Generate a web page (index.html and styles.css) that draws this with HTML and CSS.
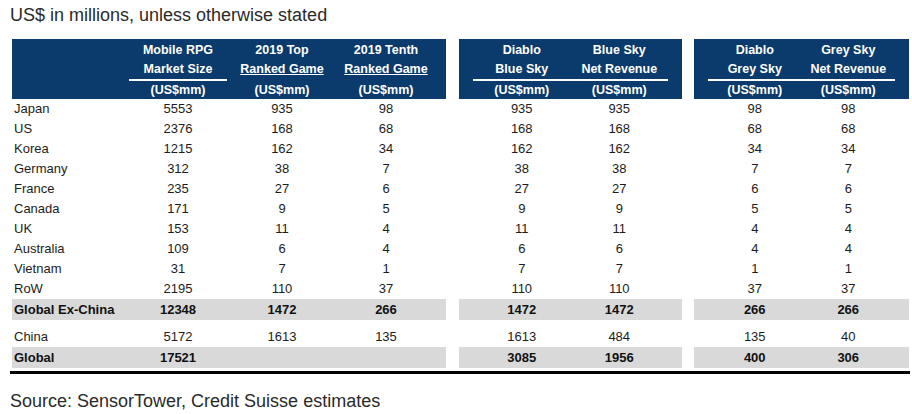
FILE: index.html
```html
<!DOCTYPE html>
<html>
<head>
<meta charset="utf-8">
<link rel="stylesheet" href="styles.css">
</head>
<body>
<div class="page">
  <div class="title">US$ in millions, unless otherwise stated</div>
  <table class="data">
    <colgroup>
      <col class="w-label"><col class="w-a"><col class="w-a"><col class="w-a"><col class="w-pr1">
      <col class="w-gap1">
      <col class="w-p"><col class="w-b"><col class="w-b"><col class="w-p">
      <col class="w-gap2">
      <col class="w-p"><col class="w-c"><col class="w-c"><col class="w-p">
    </colgroup>
    <thead>
      <tr class="h1">
        <td class="hd"></td><td class="hd">Mobile RPG</td><td class="hd">2019 Top</td><td class="hd">2019 Tenth</td><td class="hd"></td>
        <td class="gap"></td>
        <td class="hd"></td><td class="hd">Diablo</td><td class="hd">Blue Sky</td><td class="hd"></td>
        <td class="gap"></td>
        <td class="hd"></td><td class="hd">Diablo</td><td class="hd">Grey Sky</td><td class="hd"></td>
      </tr>
      <tr class="h2">
        <td class="hd"></td><td class="hd"><div class="ul inset">Market Size</div></td><td class="hd"><div class="nl"><u>Ranked Game</u></div></td><td class="hd"><div class="nl"><u>Ranked Game</u></div></td><td class="hd"></td>
        <td class="gap"></td>
        <td class="hd"></td><td class="hd"><div class="ul">Blue Sky</div></td><td class="hd"><div class="ul">Net Revenue</div></td><td class="hd"></td>
        <td class="gap"></td>
        <td class="hd"></td><td class="hd"><div class="ul">Grey Sky</div></td><td class="hd"><div class="ul">Net Revenue</div></td><td class="hd"></td>
      </tr>
      <tr class="h3">
        <td class="hd"></td><td class="hd">(US$mm)</td><td class="hd">(US$mm)</td><td class="hd">(US$mm)</td><td class="hd"></td>
        <td class="gap"></td>
        <td class="hd"></td><td class="hd">(US$mm)</td><td class="hd">(US$mm)</td><td class="hd"></td>
        <td class="gap"></td>
        <td class="hd"></td><td class="hd">(US$mm)</td><td class="hd">(US$mm)</td><td class="hd"></td>
      </tr>
    </thead>
    <tbody>
      <tr><td class="lbl">Japan</td><td>5553</td><td>935</td><td>98</td><td></td><td></td><td></td><td>935</td><td>935</td><td></td><td></td><td></td><td>98</td><td>98</td><td></td></tr>
      <tr><td class="lbl">US</td><td>2376</td><td>168</td><td>68</td><td></td><td></td><td></td><td>168</td><td>168</td><td></td><td></td><td></td><td>68</td><td>68</td><td></td></tr>
      <tr><td class="lbl">Korea</td><td>1215</td><td>162</td><td>34</td><td></td><td></td><td></td><td>162</td><td>162</td><td></td><td></td><td></td><td>34</td><td>34</td><td></td></tr>
      <tr><td class="lbl">Germany</td><td>312</td><td>38</td><td>7</td><td></td><td></td><td></td><td>38</td><td>38</td><td></td><td></td><td></td><td>7</td><td>7</td><td></td></tr>
      <tr><td class="lbl">France</td><td>235</td><td>27</td><td>6</td><td></td><td></td><td></td><td>27</td><td>27</td><td></td><td></td><td></td><td>6</td><td>6</td><td></td></tr>
      <tr><td class="lbl">Canada</td><td>171</td><td>9</td><td>5</td><td></td><td></td><td></td><td>9</td><td>9</td><td></td><td></td><td></td><td>5</td><td>5</td><td></td></tr>
      <tr><td class="lbl">UK</td><td>153</td><td>11</td><td>4</td><td></td><td></td><td></td><td>11</td><td>11</td><td></td><td></td><td></td><td>4</td><td>4</td><td></td></tr>
      <tr><td class="lbl">Australia</td><td>109</td><td>6</td><td>4</td><td></td><td></td><td></td><td>6</td><td>6</td><td></td><td></td><td></td><td>4</td><td>4</td><td></td></tr>
      <tr><td class="lbl">Vietnam</td><td>31</td><td>7</td><td>1</td><td></td><td></td><td></td><td>7</td><td>7</td><td></td><td></td><td></td><td>1</td><td>1</td><td></td></tr>
      <tr><td class="lbl">RoW</td><td>2195</td><td>110</td><td>37</td><td></td><td></td><td></td><td>110</td><td>110</td><td></td><td></td><td></td><td>37</td><td>37</td><td></td></tr>
      <tr class="total">
        <td class="lbl tb">Global Ex-China</td><td class="tb">12348</td><td class="tb">1472</td><td class="tb">266</td><td class="tb"></td>
        <td class="gap"></td>
        <td class="tb"></td><td class="tb">1472</td><td class="tb">1472</td><td class="tb"></td>
        <td class="gap"></td>
        <td class="tb"></td><td class="tb">266</td><td class="tb">266</td><td class="tb"></td>
      </tr>
      <tr class="spacer"><td colspan="15"></td></tr>
      <tr><td class="lbl">China</td><td>5172</td><td>1613</td><td>135</td><td></td><td></td><td></td><td>1613</td><td>484</td><td></td><td></td><td></td><td>135</td><td>40</td><td></td></tr>
      <tr class="total">
        <td class="lbl tb">Global</td><td class="tb">17521</td><td class="tb"></td><td class="tb"></td><td class="tb"></td>
        <td class="gap"></td>
        <td class="tb"></td><td class="tb">3085</td><td class="tb">1956</td><td class="tb"></td>
        <td class="gap"></td>
        <td class="tb"></td><td class="tb">400</td><td class="tb">306</td><td class="tb"></td>
      </tr>
    </tbody>
  </table>
  <div class="rule"></div>
  <div class="source">Source: SensorTower, Credit Suisse estimates</div>
</div>
</body>
</html>
```

FILE: styles.css
```css
html, body {
  margin: 0;
  padding: 0;
  background: #ffffff;
}

.page {
  padding-left: 10px;
  width: 900px;
  font-family: "Liberation Sans", Arial, sans-serif;
  color: #222222;
}

.title {
  margin-top: 3px;
  font-size: 18px;
  line-height: 24px;
  color: #2a2a2a;
}

.data {
  margin-top: 12px;
  margin-left: 2px;
  border-collapse: separate;
  border-spacing: 0;
  table-layout: fixed;
  width: 897px;
  font-family: "Liberation Sans", Arial, sans-serif;
  font-size: 13px;
  color: #1c1c1c;
}

.w-label { width: 114px; }
.w-a { width: 104px; }
.w-pr1 { width: 8px; }
.w-gap1 { width: 13px; }
.w-gap2 { width: 12px; }
.w-p { width: 14px; }
.w-b { width: 97.5px; }
.w-c { width: 93.5px; }

.data td {
  padding: 0;
  text-align: center;
  white-space: nowrap;
  line-height: 20px;
  height: 20px;
}

.data td.hd {
  background: #0b3a6c;
  color: #ffffff;
  font-weight: bold;
  font-size: 12.5px;
}

.data td.gap {
  background: transparent;
}

.h1 td { padding-top: 1px; line-height: 20px; height: 20px; }
.h2 td { line-height: 21px; height: 21px; }
.h3 td { line-height: 18px; height: 18px; }

.ul {
  line-height: 19px;
  border-bottom: 2px solid #ffffff;
}

.ul.inset {
  margin: 0 3px;
}

.nl {
  line-height: 19px;
  padding-bottom: 2px;
}

.nl u {
  text-decoration-thickness: 1px;
  text-underline-offset: 1px;
}

.data td.lbl {
  text-align: left;
  padding-left: 2px;
}

.total td.tb {
  background: #d9d9d9;
  font-weight: bold;
  height: 21px;
  line-height: 21px;
  color: #111111;
}

.spacer td {
  height: 7px;
  line-height: 7px;
}

.rule {
  margin-top: 3px;
  width: 900px;
  height: 3px;
  background: #000000;
}

.source {
  margin-top: 15px;
  font-size: 18px;
  line-height: 24px;
  color: #2a2a2a;
}
```
